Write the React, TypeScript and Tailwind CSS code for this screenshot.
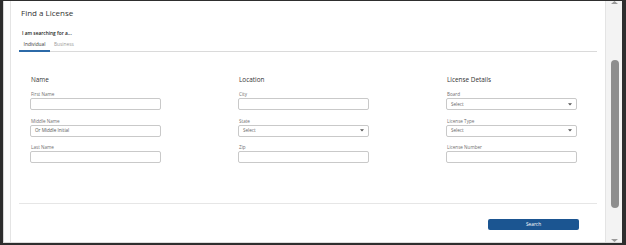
import React from "react";

const Label = ({ children }: { children: React.ReactNode }) => (
  <div className="text-[4.6px] leading-[6px] text-[#6f6f6f] mb-[1px] pl-[1px]">{children}</div>
);

const TextInput = ({ placeholder }: { placeholder?: string }) => (
  <div className="h-[12px] border border-[#c9c9c9] rounded-[2px] bg-white flex items-center pl-[4px] text-[4.6px] text-[#555]">
    {placeholder}
  </div>
);

const SelectInput = () => (
  <div className="h-[12px] border border-[#c9c9c9] rounded-[2px] bg-white flex items-center justify-between pl-[4px] pr-[4px] text-[4.6px] text-[#666]">
    <span>Select</span>
    <svg width="4" height="3" viewBox="0 0 4 3">
      <path d="M0 0.3 L4 0.3 L2 2.6 Z" fill="#555" />
    </svg>
  </div>
);

const Field = ({ label, children, first }: { label: string; children: React.ReactNode; first?: boolean }) => (
  <div className={first ? "mt-[7px]" : "mt-[7.5px]"}>
    <Label>{label}</Label>
    {children}
  </div>
);

const Column = ({ title, children }: { title: string; children: React.ReactNode }) => (
  <div className="w-[131px] flex flex-col">
    <div className="text-[6.4px] leading-[8px] text-[#333] font-medium pl-[1px]">{title}</div>
    {children}
  </div>
);

export default function App() {
  return (
    <div
      className="w-[626px] h-[245px] bg-[#2e2e2e] pt-px pl-[3px] pr-[4px] pb-[2px] flex"
      style={{ fontFamily: '"Open Sans", "Liberation Sans", sans-serif' }}
    >
      <div className="flex-1 flex bg-white border-b border-[#dcdcdc] border-l border-l-[#d8d8d8]">
        <div className="w-[6px]" />
        <div className="flex-1 border-l border-r border-[#e4e4e4] px-[8px] flex flex-col">
          <div className="mt-[7px] ml-[2px] text-[8px] leading-[10px] text-[#333]">Find a License</div>
          <div className="mt-[12px] ml-[3px] text-[4.8px] leading-[6px] font-semibold text-[#222]">
            I am searching for a...
          </div>
          <div className="mt-[5px] flex border-b border-[#dadada]">
            <div className="w-[31px] -mb-px pb-[3px] border-b-2 border-[#2c6aa8] text-center text-[4.8px] leading-[6px] text-[#333] font-medium">
              Individual
            </div>
            <div className="ml-[4px] pb-[3px] text-[4.8px] leading-[6px] text-[#9a9a9a]">Business</div>
          </div>

          <div className="mt-[24px] pl-[11px] flex gap-[77px]">
            <Column title="Name">
              <Field label="First Name" first>
                <TextInput />
              </Field>
              <Field label="Middle Name">
                <TextInput placeholder="Or Middle Initial" />
              </Field>
              <Field label="Last Name">
                <TextInput />
              </Field>
            </Column>
            <Column title="Location">
              <Field label="City" first>
                <TextInput />
              </Field>
              <Field label="State">
                <SelectInput />
              </Field>
              <Field label="Zip">
                <TextInput />
              </Field>
            </Column>
            <Column title="License Details">
              <Field label="Board" first>
                <SelectInput />
              </Field>
              <Field label="License Type">
                <SelectInput />
              </Field>
              <Field label="License Number">
                <TextInput />
              </Field>
            </Column>
          </div>

          <div className="mt-[40px] border-t border-[#e6e6e6]" />
          <div className="mt-[15px] flex justify-end pr-[18px]">
            <button className="w-[91px] h-[11px] bg-[#1b5591] rounded-[2px] text-white text-[4.8px] leading-[11px] text-center">
              Search
            </button>
          </div>
        </div>
        <div className="w-[16px] bg-[#f3f3f3] flex flex-col items-center">
          <svg width="7" height="3" viewBox="0 0 7 3" className="ml-[1px]">
            <path d="M0 3 L3.5 0 L7 3 Z" fill="#9a9a9a" />
          </svg>
          <div className="mt-[56px] ml-[1px] w-[8px] h-[148px] bg-[#8e8e8e] rounded-[4px]" />
          <div className="flex-1" />
          <svg width="7" height="3" viewBox="0 0 7 3" className="ml-[1px]">
            <path d="M0 0 L7 0 L3.5 3 Z" fill="#9a9a9a" />
          </svg>
        </div>
      </div>
    </div>
  );
}
